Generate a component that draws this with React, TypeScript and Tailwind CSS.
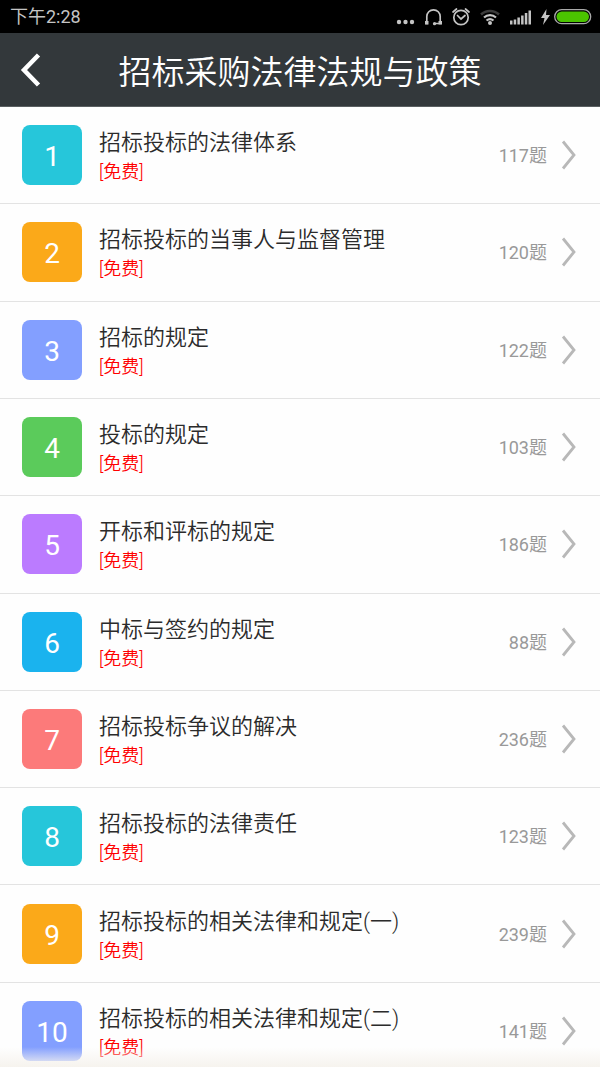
interface Chapter {
  title: string;
  count: number;
  color: string;
}

const chapters: Chapter[] = [
  { title: "招标投标的法律体系", count: 117, color: "bg-[#26c6da]" },
  { title: "招标投标的当事人与监督管理", count: 120, color: "bg-[#fba919]" },
  { title: "招标的规定", count: 122, color: "bg-[#839fff]" },
  { title: "投标的规定", count: 103, color: "bg-[#5bcb5b]" },
  { title: "开标和评标的规定", count: 186, color: "bg-[#bb7bff]" },
  { title: "中标与签约的规定", count: 88, color: "bg-[#1ab3ee]" },
  { title: "招标投标争议的解决", count: 236, color: "bg-[#fc7a7a]" },
  { title: "招标投标的法律责任", count: 123, color: "bg-[#26c6da]" },
  { title: "招标投标的相关法律和规定(一)", count: 239, color: "bg-[#fba919]" },
  { title: "招标投标的相关法律和规定(二)", count: 141, color: "bg-[#839fff]" },
];

const StatusIcons = () => {
  return (
    <svg width="200" height="24" viewBox="0 0 200 24" fill="none" aria-hidden="true">
      {/* more */}
      <g fill="#c4c4c4">
        <circle cx="7" cy="17" r="2.2" />
        <circle cx="13.5" cy="17" r="2.2" />
        <circle cx="20" cy="17" r="2.2" />
      </g>
      {/* headset */}
      <path
        d="M36 18.5 H34.5 C35 16.5 34.8 14 34.8 11.5 A6.7 6.7 0 0 1 48.2 11.5 C48.2 14 48 16.5 48.5 18.5 H43"
        stroke="#c4c4c4"
        strokeWidth="1.7"
      />
      <path d="M33 16h3.5v3.5h-3.5zM46.5 16h3.5v3.5h-3.5z" fill="#c4c4c4" />
      <circle cx="42.5" cy="18.7" r="1.6" fill="#c4c4c4" />
      {/* alarm */}
      <g stroke="#c4c4c4" strokeWidth="1.7" strokeLinecap="round">
        <circle cx="69" cy="12.5" r="7.2" />
        <path d="M65.5 10.5 L69 14 L73 10.5" />
        <path d="M61 7 L64.5 4 M73.5 4 L77 7" />
      </g>
      {/* wifi */}
      <path d="M89 9.5 A13 13 0 0 1 107 9.5" stroke="#3c3c3c" strokeWidth="2.5" />
      <path d="M92 12.5 A9 9 0 0 1 104 12.5 M94.5 15.5 A5.5 5.5 0 0 1 101.5 15.5" stroke="#c4c4c4" strokeWidth="2.2" />
      <circle cx="98" cy="18" r="2" fill="#c4c4c4" />
      {/* signal */}
      <path
        d="M118 15.5h2.5v4h-2.5zM121.7 14.5h2.5v5h-2.5zM125.4 12.5h2.5v7h-2.5zM129.1 10.5h2.5v9h-2.5zM132.8 8h2.5v11.5h-2.5zM136.5 5.5h2.5v14h-2.5z"
        fill="#c4c4c4"
      />
      {/* charging */}
      <path d="M154.500 4 L149 13 H152.500 L151 20 L158 10 H154 Z" fill="#c4c4c4" />
      {/* battery */}
      <rect x="162.700" y="4.700" width="36" height="14" rx="7" stroke="#a9a9a9" strokeWidth="1.300" />
      <rect x="164.500" y="6.500" width="32.500" height="10.500" rx="5.200" fill="#4bc400" />
    </svg>
  );
};

const ChapterRow = ({ chapter, index }: { chapter: Chapter; index: number }) => {
  return (
    <li className="border-b border-[#e3e3e3]">
      <a href={`#chapter-${index}`} className="flex h-full items-center pr-6 pl-[22px]">
        <span
          className={`flex size-[60px] shrink-0 items-center justify-center rounded-lg pt-1 text-[28px] leading-8 text-white ${chapter.color}`}
        >
          {index}
        </span>
        <span className="ml-[17px] flex min-w-0 flex-1 flex-col pt-[2px]">
          <span className="truncate text-[22px] leading-8 font-[350] text-[#2b2b2b]">{chapter.title}</span>
          <span className="text-[18px] leading-[26px] font-[350] text-[#f00]">[免费]</span>
        </span>
        <span className="pt-[2px] text-[18px] leading-[26px] text-[#999]">{chapter.count}题</span>
        <svg className="ml-[14px] shrink-0" width="15" height="30" viewBox="0 0 15 30" fill="none" aria-hidden="true">
          <path d="M2 1.500 L13 15 L2 28.500" stroke="#b8b8b8" strokeWidth="2.800" />
        </svg>
      </a>
    </li>
  );
};

const App = () => {
  return (
    <div className="flex h-screen flex-col bg-[#fefefe] font-[Roboto,'Noto_Sans_CJK_SC',sans-serif]">
      <div className="flex h-[33px] shrink-0 items-center justify-between bg-black pr-2 pl-[10px]">
        <span className="text-[18px] leading-6 text-[#c4c4c4]">下午2:28</span>
        <StatusIcons />
      </div>
      <header className="grid h-[74px] shrink-0 grid-cols-[56px_1fr_56px] items-center border-b border-[#5a5f61] bg-[#33383b]">
        <button type="button" aria-label="返回" className="pl-5">
          <svg width="22" height="34" viewBox="0 0 22 34" fill="none" aria-hidden="true">
            <path d="M18.500 2 L4 17 L18.500 32" stroke="#fff" strokeWidth="4.500" />
          </svg>
        </button>
        <h1 className="pt-[6px] text-center text-[33px] leading-10 font-[350] whitespace-nowrap text-white">
          招标采购法律法规与政策
        </h1>
      </header>
      <main className="relative min-h-0 flex-1">
        <div className="h-full overflow-y-auto [scrollbar-width:none]">
          <ol className="grid min-h-[973px] auto-rows-fr">
            {chapters.map((chapter, i) => (
              <ChapterRow key={chapter.title} chapter={chapter} index={i + 1} />
            ))}
          </ol>
        </div>
        <div className="pointer-events-none absolute inset-x-0 bottom-0 h-5 bg-linear-to-b from-[#f6f3ee]/0 to-[#f6f3ee]" />
      </main>
    </div>
  );
};

export default App;
